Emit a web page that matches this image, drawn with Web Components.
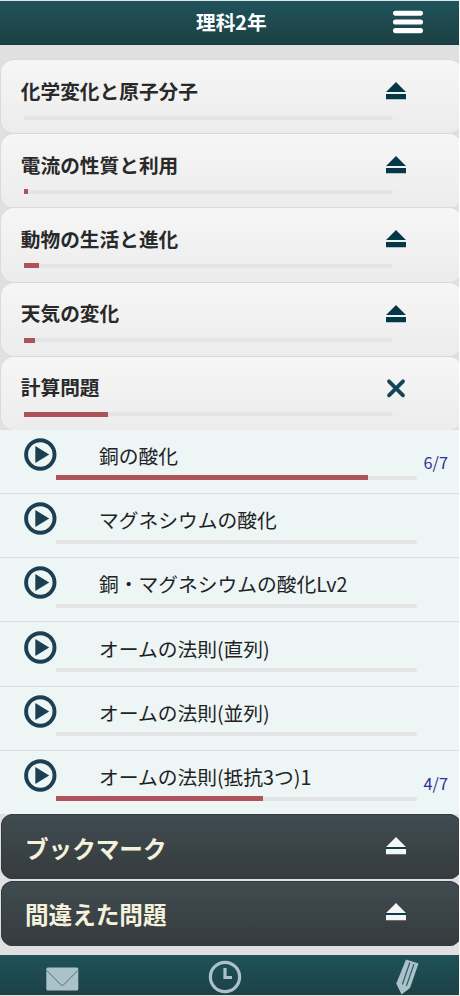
<!DOCTYPE html>
<html lang="ja">
<head>
<meta charset="utf-8">
<title>理科2年</title>
<style>
html,body{margin:0;background:#fff}
body{width:460px;height:996px;overflow:hidden;font-family:"Noto Sans CJK JP","Noto Sans",sans-serif}
</style>
</head>
<body>
<study-app></study-app>
<script>
const define=(name,css,html,setup)=>customElements.define(name,class extends HTMLElement{
  connectedCallback(){
    if(this.shadowRoot)return;
    const root=this.attachShadow({mode:"open"});
    const t=document.createElement("template");
    t.innerHTML=`<style>*{box-sizing:border-box}${css}</style>${html}`;
    root.append(t.content.cloneNode(true));
    if(setup)setup(this,root);
  }
});

define("eject-icon",`:host{display:block;width:20px;height:18px;color:#043849}svg{display:block}`,
`<svg width="20" height="18" viewBox="0 0 20 18"><path class="gap" d="M0 9h20v4H0z" fill="none"/><path d="M10 0 20 10H0zM0 12h20v5.3H0z" fill="currentColor"/></svg>`,
(el,root)=>{if(el.hasAttribute("light"))root.querySelector(".gap").setAttribute("fill","#0b3e4b")});

define("close-icon",`:host{display:block;width:20px;height:18px}svg{display:block;overflow:visible}`,
`<svg width="20" height="18" viewBox="0 0 20 18"><path d="m3 2.3 14 14M17 2.3l-14 14" stroke="#124453" stroke-width="3.8" stroke-linecap="round"/></svg>`);

define("play-icon",`:host{display:block;width:33px;height:33px}svg{display:block}`,
`<svg width="33" height="33" viewBox="0 0 33 33"><circle cx="16.3" cy="16.5" r="14.2" fill="none" stroke="#1d3f52" stroke-width="3.9"/><path d="M11.3 8v17L25.2 16.5z" fill="#1d3f52"/></svg>`);

define("progress-bar",`:host{display:flex;align-items:center;height:6px}
.track{width:100%;height:4px;border-radius:0 2px 2px 0;background:#e3e4e4;display:flex;align-items:center}
.fill{height:5px;width:var(--fill,0);background:#ad5359;flex:none}`,
`<div class="track"><div class="fill"></div></div>`);

define("app-header",`:host{display:grid;grid-template-columns:196px 1fr 66px;height:44px;align-items:center;background:linear-gradient(#20535b,#1c4044);color:#fff;border-bottom:1px solid #173b3f}
.title{grid-column:2;font-weight:700;font-size:19.7px;line-height:28px;margin-top:-1px;white-space:nowrap}
svg{display:block;margin-top:-1px}`,
`<div class="title"><slot></slot></div><svg width="30" height="24" viewBox="0 0 30 24"><path d="M2.5 3.2h25M2.5 12h25M2.5 20.6h25" stroke="#fff" stroke-width="5.1" stroke-linecap="round"/></svg>`);

define("unit-card",`:host{display:block;height:74.1px;padding-left:1.3px}
.card{height:73.2px;width:461px;border-radius:13px;background:linear-gradient(#f6f6f6,#ececec);box-shadow:0 0 0 .7px #d8d8d8;padding:15px 0 0 19.5px}
.row{display:grid;grid-template-columns:365.5px 20px;align-items:center}
.name{font-size:19.7px;font-weight:700;line-height:30px;color:#292929;white-space:nowrap;padding-top:.5px;margin-bottom:-.5px}
eject-icon,close-icon{margin-top:2px}
progress-bar{width:369px;margin:9.5px 0 0 3.5px}`,
`<div class="card"><div class="row"><div class="name"><slot></slot></div><eject-icon></eject-icon></div><progress-bar></progress-bar></div>`,
(el,root)=>{
  if(el.hasAttribute("open"))root.querySelector("eject-icon").replaceWith(document.createElement("close-icon"));
  root.querySelector("progress-bar").style.setProperty("--fill",(el.getAttribute("value")||0)+"px");
});

define("lesson-row",`:host{display:grid;grid-template-columns:24px 31.5px 361.5px 42px;grid-template-rows:42.5px 10px 1fr;height:64.2px;background:#eef5f5;border-bottom:1px solid #d8dfdf}
:host([last]){border-bottom-color:#eef5f5}
play-icon{grid-column:2;grid-row:1;margin-top:8.3px}
.name{grid-column:3;grid-row:1;padding:11.3px 0 0 43.5px;line-height:30px;font-size:19.75px;color:#202326;white-space:nowrap}
progress-bar{grid-column:3;grid-row:2;margin-top:2.3px}
.score{grid-column:4;grid-row:1/3;align-self:end;line-height:24px;font-size:16.3px;color:#303099;padding-left:6.5px;margin-bottom:8.5px}`,
`<play-icon></play-icon><div class="name"><slot></slot></div><progress-bar></progress-bar><div class="score"></div>`,
(el,root)=>{
  root.querySelector(".score").textContent=el.getAttribute("score")||"";
  root.querySelector("progress-bar").style.setProperty("--fill",(el.getAttribute("value")||0)+"px");
});

define("menu-card",`:host{display:block;height:66.4px;padding-left:1px}
.card{height:65px;width:460px;border-radius:12px;background:linear-gradient(#404c51,#363b3e);box-shadow:inset 0 0 0 1px #343b3f;padding:0 0 0 24px;display:grid;grid-template-columns:361px 20px;align-items:center}
.name{font-size:23.6px;font-weight:700;line-height:34px;color:#f5f2dc;white-space:nowrap;margin-top:2px}
eject-icon{color:#f4f6f6;margin-top:-1.5px}`,
`<div class="card"><div class="name"><slot></slot></div><eject-icon light></eject-icon></div>`);

define("tab-bar",`:host{display:grid;grid-template-columns:46px 162px 189px 62px;height:40.5px;background:linear-gradient(#1e5359,#1d4146)}
svg{display:block;overflow:visible}
.mail{grid-column:2;margin-top:12.5px}.clock{margin-top:5px}.pencil{margin-top:4.5px;margin-left:-1px}`,
`<svg class="mail" width="33" height="24" viewBox="0 0 33 24"><rect x=".3" y=".5" width="32" height="23" rx="1.5" fill="#abc2ca"/><path d="m.8 3.5 14 14.2q1.5 1.4 3 0L31.8 3.5" fill="none" stroke="#4c737d" stroke-width="1"/></svg>
<svg class="clock" width="34" height="34" viewBox="0 0 34 34"><circle cx="17" cy="17" r="14.6" fill="none" stroke="#abc2ca" stroke-width="3.2"/><path d="M17 8v9.5h7" fill="none" stroke="#abc2ca" stroke-width="3.2"/></svg>
<svg class="pencil" width="24" height="36" viewBox="0 0 24 36"><path d="M10 .5 22.5 4.5 14 29 5.5 35.5.3 24.5z" fill="#abc2ca"/><path d="M13.8 3.5 6.4 25.5M18 5 10.4 27" stroke="#315d68" stroke-width="1.2"/></svg>`);

define("study-app",`:host{display:flex;flex-direction:column;width:459px;height:995px;border-top:1px solid #dde5e6;background:#e0e0e0;overflow:hidden}
main{padding-top:15.3px;height:909.5px;overflow:hidden;flex:none}
.lessons{height:384.5px;overflow:hidden;margin-top:-1px}
tab-bar{flex:none}`,
`<app-header>理科2年</app-header><main>
<unit-card>化学変化と原子分子</unit-card>
<unit-card value="4">電流の性質と利用</unit-card>
<unit-card value="15">動物の生活と進化</unit-card>
<unit-card value="11">天気の変化</unit-card>
<unit-card value="84" open>計算問題</unit-card>
<div class="lessons">
<lesson-row value="312" score="6/7">銅の酸化</lesson-row>
<lesson-row>マグネシウムの酸化</lesson-row>
<lesson-row>銅・マグネシウムの酸化Lv2</lesson-row>
<lesson-row>オームの法則(直列)</lesson-row>
<lesson-row>オームの法則(並列)</lesson-row>
<lesson-row value="207" score="4/7" last>オームの法則(抵抗3つ)1</lesson-row>
</div>
<menu-card>ブックマーク</menu-card>
<menu-card>間違えた問題</menu-card>
</main><tab-bar></tab-bar>`);
</script>
</body>
</html>
